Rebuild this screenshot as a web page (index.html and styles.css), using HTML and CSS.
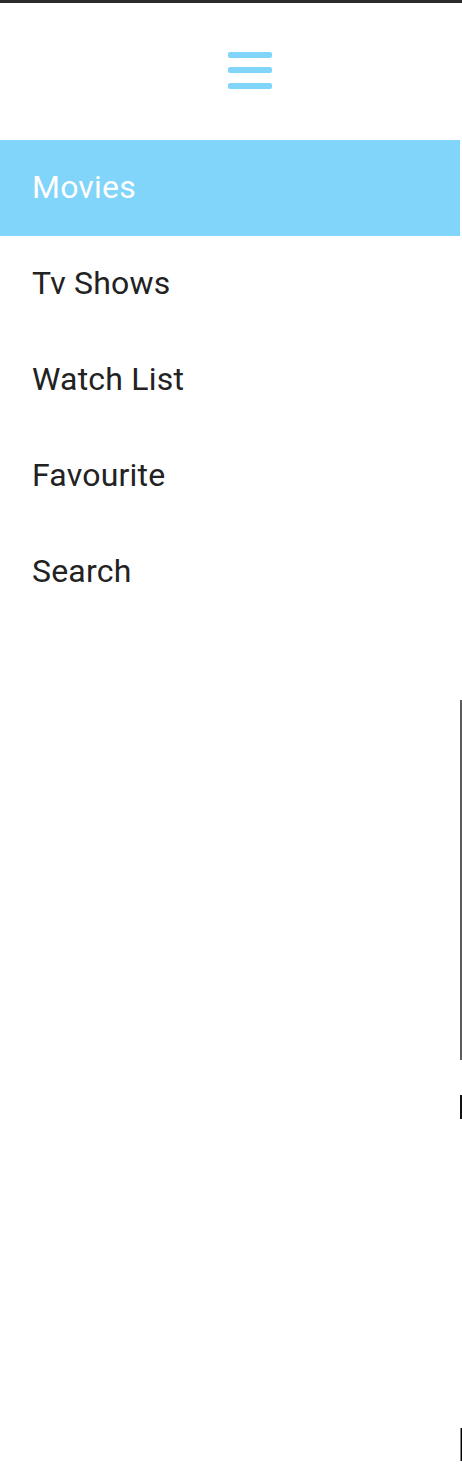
FILE: index.html
```html
<!DOCTYPE html>
<html lang="en">
<head>
<meta charset="utf-8">
<title>Menu</title>
<link rel="stylesheet" href="styles.css">
</head>
<body>
<div class="topbar"></div>
<header class="header">
  <button class="burger" aria-label="Menu">
    <span class="bar"></span>
    <span class="bar"></span>
    <span class="bar"></span>
  </button>
</header>
<nav class="nav">
  <a class="item active" href="#">Movies</a>
  <a class="item" href="#">Tv Shows</a>
  <a class="item" href="#">Watch List</a>
  <a class="item" href="#">Favourite</a>
  <a class="item" href="#">Search</a>
</nav>
<div class="edge edge-long"></div>
<div class="edge edge-short"></div>
<div class="edge edge-bottom"></div>
</body>
</html>
```
FILE: styles.css
```css
* { box-sizing: border-box; }
html, body {
  margin: 0;
  padding: 0;
  background: #ffffff;
  font-family: Roboto, "Noto Sans", Arial, sans-serif;
}
body {
  position: relative;
  width: 462px;
  height: 1480px;
  overflow: hidden;
}
.topbar {
  height: 3px;
  background: #2b2b2d;
}
.header {
  height: 137px;
  display: flex;
  align-items: center;
  padding-left: 228px;
}
.burger {
  display: flex;
  flex-direction: column;
  gap: 9.5px;
  padding: 0;
  margin: 0;
  border: 0;
  background: none;
  margin-top: -3px;
}
.bar {
  display: block;
  width: 44px;
  height: 6px;
  border-radius: 2px;
  background: #81d4fa;
}
.nav {
  width: 460px;
  display: flex;
  flex-direction: column;
}
.item {
  display: block;
  height: 96px;
  line-height: 94px;
  padding-left: 32px;
  font-size: 32px;
  letter-spacing: 0.2px;
  color: #222222;
  text-decoration: none;
}
.item.active {
  background: #81d4fa;
  color: #ffffff;
}
.edge {
  position: absolute;
  left: 460px;
  width: 2px;
}
.edge-long {
  top: 700px;
  height: 360px;
  background: #5c5c5c;
}
.edge-short {
  top: 1095px;
  height: 24px;
  background: #111111;
}
.edge-bottom {
  top: 1428px;
  height: 33px;
  background: #000000;
  border-left: 1px solid #888888;
}
```
